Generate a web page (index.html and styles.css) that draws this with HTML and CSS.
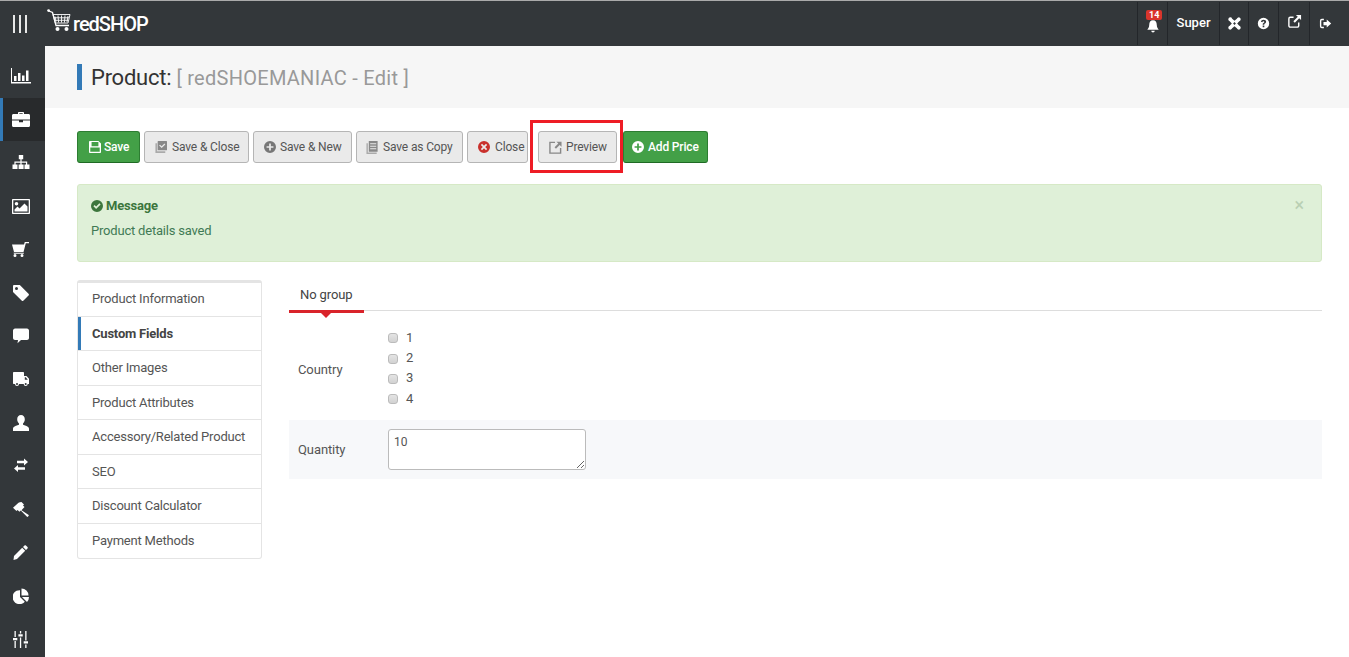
FILE: index.html
```html
<!DOCTYPE html>
<html lang="en">
<head>
<meta charset="utf-8">
<title>redSHOP - Product Edit</title>
<link rel="stylesheet" href="styles.css">
</head>
<body>
<header class="topbar">
  <div class="burger"><span></span><span></span><span></span></div>
  <div class="logo">
    <svg class="logo-cart" viewBox="0 0 24 24" width="24" height="24"><circle cx="1.600" cy="1.600" r="1.400" fill="#fff"/><path d="M2 2l3.500 1.500L9 16.500h13" fill="none" stroke="#fff" stroke-width="1.300"/><path d="M6 5.500h17l-2 8.500H8.300zM8 7.500l1 5M11 6.500l.6 7M14.500 6.500v7M18 6.500l-.6 7M21 7l-1 6M7 8.800h15M7.800 11.300h13.600" fill="none" stroke="#fff" stroke-width=".9"/><circle cx="10.500" cy="20" r="2" fill="#fff"/><circle cx="19.500" cy="20" r="2" fill="#fff"/></svg>
    <span class="logo-text">redSHOP</span>
  </div>
  <nav class="topnav">
    <a class="topcell bell"><svg viewBox="0 0 16 16" width="14" height="14"><path d="M8 1.500c3 0 4.300 2.200 4.300 5 0 3.500 1.700 4.800 2.200 5.800H1.500c.5-1 2.200-2.300 2.200-5.800 0-2.800 1.300-5 4.300-5zM6 13.300h4a2 2 0 0 1-4 0z" fill="#fff"/></svg><b class="badge">14</b></a>
    <a class="topcell user">Super</a>
    <a class="topcell joomla"><svg viewBox="0 0 16 16" width="13" height="13"><path fill="#fff" fill-rule="evenodd" d="M2.800 .4a2.400 2.400 0 0 1 2.300 1.700L8 4.700l2.900-2.600a2.400 2.400 0 1 1 3 3L11.300 8l2.600 2.900a2.400 2.400 0 1 1-3 3L8 11.300l-2.900 2.600a2.400 2.400 0 1 1-3-3L4.700 8 2.100 5.100A2.400 2.400 0 0 1 2.800 .4zM8 6.300L6.300 8 8 9.700 9.700 8z"/></svg></a>
    <a class="topcell help"><svg viewBox="0 0 16 16" width="13" height="13"><path fill-rule="evenodd" fill="#fff" d="M8 1a7 7 0 1 1 0 14A7 7 0 0 1 8 1zM7 10.500v2h2v-2zM8 3.500c-1.700 0-2.900.9-3.200 2.400l1.800.5c.2-.8.600-1.200 1.300-1.200s1.100.3 1.100.9c0 .5-.3.800-.9 1.200C7.300 7.400 7 8 7 9.500h2c0-.8.200-1 .8-1.500.8-.5 1.400-1.200 1.400-2.200 0-1.400-1.300-2.300-3.200-2.300z"/></svg></a>
    <a class="topcell ext"><svg viewBox="0 0 16 16" width="15" height="15"><path d="M7 3.500H3.500A1.500 1.500 0 0 0 2 5v7.500A1.500 1.500 0 0 0 3.500 14H11a1.500 1.500 0 0 0 1.500-1.500V9" fill="none" stroke="#fff" stroke-width="1.500"/><path d="M9.500 1H15v5.500l-2-2-4.700 4.700-1.500-1.500L11.500 3z" fill="#fff"/></svg></a>
    <a class="topcell logout"><svg viewBox="0 0 16 16" width="13" height="13"><path d="M6 3H3.500A1.500 1.500 0 0 0 2 4.500v7A1.500 1.500 0 0 0 3.500 13H6" fill="none" stroke="#fff" stroke-width="1.700"/><path d="M9.500 3L15 8l-5.500 5v-3H5.500V6h4z" fill="#fff"/></svg></a>
  </nav>
</header>
<div class="shell">
  <aside class="sidebar">
    <a class="side-item"><svg viewBox="0 0 20 16" width="20" height="16"><path d="M0 0h1v14h19v1.500H0z" fill="#fff"/><path d="M3 8h2.500v5H3zM7 5h2.500v8H7zM11 7.500h2.500V13H11zM15 2.500h2.500V13H15z" fill="#fff"/></svg></a>
    <a class="side-item active"><svg viewBox="0 0 18 15" width="18" height="15"><path d="M6 2V.8C6 .3 6.300 0 6.800 0h4.400c.5 0 .8.300.8.800V2h4.500c.9 0 1.500.6 1.500 1.500V7.500H0V3.500C0 2.600.6 2 1.500 2zM7.300 1.200V2h3.400v-.8z" fill="#fff" fill-rule="evenodd"/><path d="M0 8.500h7v1.800h4V8.500h7v5c0 .9-.6 1.500-1.500 1.500h-15C.6 15 0 14.400 0 13.500z" fill="#fff"/></svg></a>
    <a class="side-item"><svg viewBox="0 0 18 15" width="18" height="15"><path d="M6.800 0h4.400v4.300H9.600V6.500h5.600v3h2.300v4.500h-5v-4.500h1.500V7.700H9.600v1.800h2v4.500h-5V9.500h1.800V7.700H3.600v1.800h1.900v4.500h-5V9.500h1.900v-3h6V4.300H6.800z" fill="#fff"/></svg></a>
    <a class="side-item"><svg viewBox="0 0 18 15" width="18" height="15"><path fill-rule="evenodd" fill="#fff" d="M1 0h16c.6 0 1 .4 1 1v13c0 .6-.4 1-1 1H1c-.6 0-1-.4-1-1V1c0-.6.4-1 1-1zM1.300 1.300v12.400h15.400V1.300zM2.500 12.500v-2l3-3 2 2 5-5 3 3v5zM4.500 3a1.800 1.800 0 1 1 0 3.600 1.800 1.800 0 0 1 0-3.600z"/></svg></a>
    <a class="side-item"><svg viewBox="0 0 17 15" width="17" height="15"><path d="M0 2.500h12l.8-2.500H17v1.300h-3.200L11.500 10H2zM3 12a1.500 1.500 0 1 1 0 3 1.500 1.500 0 0 1 0-3zM10 12a1.500 1.500 0 1 1 0 3 1.500 1.500 0 0 1 0-3z" fill="#fff"/><path d="M1.500 10.800h10.300v1H2z" fill="#fff"/></svg></a>
    <a class="side-item"><svg viewBox="0 0 16 16" width="16" height="16"><path fill-rule="evenodd" fill="#fff" d="M1.200 0h5.600L15.500 8.700c.6.600.6 1.300 0 1.900l-5 5c-.6.600-1.300.6-1.900 0L0 7V1.200C0 .5.500 0 1.200 0zM3.500 2a1.500 1.500 0 1 0 0 3 1.500 1.500 0 0 0 0-3z"/></svg></a>
    <a class="side-item"><svg viewBox="0 0 16 16" width="16" height="16"><path d="M2 .5h12c1 0 2 1 2 2v7.500c0 1-1 2-2 2H8l-3.500 3.200.5-3.200H2c-1 0-2-1-2-2V2.500c0-1 1-2 2-2z" fill="#fff"/></svg></a>
    <a class="side-item"><svg viewBox="0 0 16 15" width="16" height="15"><path fill-rule="evenodd" fill="#fff" d="M1 0h9c.6 0 1 .4 1 1v3h2.500L16 6.800V12h-1.300a2 2 0 0 1-4 0H6a2 2 0 0 1-4 0H1c-.6 0-1-.4-1-1V1c0-.6.400-1 1-1zM11.800 5.300V7.800h3l-2-2.500zM4 11a1 1 0 1 0 0 2 1 1 0 0 0 0-2zM12.700 11a1 1 0 1 0 0 2 1 1 0 0 0 0-2z"/></svg></a>
    <a class="side-item"><svg viewBox="0 0 16 16" width="16" height="16"><path d="M8 0c2.300 0 3.800 1.800 3.800 4.300 0 2-.9 3.500-1.800 4.300v1.100c2.500.9 6 1.700 6 4.100V16H0v-2.200c0-2.400 3.500-3.200 6-4.100V8.600C5.100 7.800 4.200 6.300 4.200 4.300 4.200 1.800 5.700 0 8 0z" fill="#fff"/></svg></a>
    <a class="side-item"><svg viewBox="0 0 14 15" width="14" height="15"><path d="M14 4L10 .5v2.300H3V5.200h7v2.300zM0 10.500L4 7v2.300h7v2.400H4V14z" fill="#fff"/></svg></a>
    <a class="side-item"><svg viewBox="0 0 16 15" width="16" height="15"><path d="M0 5.800L5.500 .8c.8-.6 1.800-.8 3-.8L11 2.500l-1 1 1.500 1.500-3 3.200 7.200 4.800c.5.600-1 2.400-1.700 1.800L7.800 8.500 6.500 9.800 4.500 8 3.500 9z" fill="#fff"/></svg></a>
    <a class="side-item"><svg viewBox="0 0 15 15" width="15" height="15"><path d="M11.500.5c.4-.4 1-.4 1.400 0l1.600 1.600c.4.400.4 1 0 1.400L13 5 10 2zM9.200 2.800l3 3L4 14 .5 15l.5-4z" fill="#fff"/></svg></a>
    <a class="side-item"><svg viewBox="0 0 16 16" width="16" height="16"><path d="M7 2.200V9l4.800 4.800A7 7 0 1 1 7 2.200z" fill="#fff"/><path d="M8.500.5A7 7 0 0 1 15.500 7.500H8.500zM9 9h7a7 7 0 0 1-2 4.900z" fill="#fff"/></svg></a>
    <a class="side-item"><svg viewBox="0 0 15 17" width="15" height="17"><path d="M1.500 0h1.300v6H1.500zM1.500 10h1.300v7H1.500zM0 7h4.300v2.300H0zM6.900 0h1.300v2.500H6.900zM6.900 6.500h1.300V17H6.900zM5.400 3.300h4.300v2.300H5.400zM12.200 0h1.300v9.500h-1.300zM12.200 13.500h1.300V17h-1.300zM10.700 10.300H15v2.300h-4.300z" fill="#fff"/></svg></a>
  </aside>
  <main class="content">
    <div class="titlebar">
      <h1 class="page-title">Product: <small>[ redSHOEMANIAC - Edit ]</small></h1>
    </div>
    <div class="body-wrap">
      <div class="toolbar">
        <button class="btn btn-green btn-save"><svg viewBox="0 0 14 14" width="12" height="12"><path fill-rule="evenodd" fill="#fff" d="M1 0h10l3 3v10c0 .6-.4 1-1 1H1c-.6 0-1-.4-1-1V1c0-.6.400-1 1-1zM3 1.300V6h8V1.300zM1.500 7.500v5h11v-5z"/></svg>Save</button>
        <button class="btn btn-sc"><svg viewBox="0 0 14 14" width="12" height="12"><path d="M2.500 2.500V12H12v2H.5V2.500z" fill="#aaa"/><path fill-rule="evenodd" d="M3.800 0h9.500c.4 0 .7.300.7.700v9.500c0 .4-.3.700-.7.700H3.800c-.4 0-.7-.3-.7-.7V.7c0-.4.300-.7.700-.7zM5.800 4.300L4.800 5.300l3 2.800L12 4l-1-1-3.200 3z" fill="#888"/></svg>Save &amp; Close</button>
        <button class="btn btn-sn"><svg viewBox="0 0 14 14" width="12" height="12"><path fill-rule="evenodd" fill="#777" d="M7 0a7 7 0 1 1 0 14A7 7 0 0 1 7 0zM6 3v3H3v2h3v3h2V8h3V6H8V3z"/></svg>Save &amp; New</button>
        <button class="btn btn-copy"><svg viewBox="0 0 14 14" width="13" height="13"><path d="M2 2.500V12.500h9.500V14H.5V2.500z" fill="#aaa"/><path fill-rule="evenodd" fill="#888" d="M3 0h9.500v11.500H3zM4.500 2.500v1h6.500v-1zM4.500 5.200v1h6.500v-1zM4.500 7.900v1h6.500v-1z"/></svg>Save as Copy</button>
        <button class="btn btn-close"><svg viewBox="0 0 14 14" width="12" height="12"><path fill-rule="evenodd" fill="#c9302c" d="M7 0a7 7 0 1 1 0 14A7 7 0 0 1 7 0zM4.700 3.300L3.300 4.700 5.600 7 3.300 9.300l1.400 1.400L7 8.400l2.300 2.300 1.400-1.400L8.400 7l2.300-2.300-1.400-1.400L7 5.600z"/></svg>Close</button>
        <div class="preview-wrap">
          <span class="highlight"></span>
          <button class="btn btn-preview"><svg viewBox="0 0 14 14" width="13" height="13"><path d="M6.500 1.500H1v11.500h11.500V7.500" fill="none" stroke="#888" stroke-width="1.500"/><path d="M8 .8h5.500v5.500l-2-2-4 4L6 6.800l4-4z" fill="#888"/></svg>Preview</button>
        </div>
        <button class="btn btn-green btn-add"><svg viewBox="0 0 14 14" width="12" height="12"><path fill-rule="evenodd" fill="#fff" d="M7 0a7 7 0 1 1 0 14A7 7 0 0 1 7 0zM6 3v3H3v2h3v3h2V8h3V6H8V3z"/></svg>Add Price</button>
      </div>
      <div class="alert">
        <span class="alert-close">×</span>
        <h4 class="alert-title"><svg viewBox="0 0 14 14" width="12" height="12"><path fill-rule="evenodd" fill="#3c763d" d="M7 0a7 7 0 1 1 0 14A7 7 0 0 1 7 0zM4.200 5.800L2.800 7.200 6 10.400l5.200-5.200-1.400-1.400L6 7.600z"/></svg>Message</h4>
        <p class="alert-text">Product details saved</p>
      </div>
      <div class="columns">
        <ul class="sidetabs">
          <li>Product Information</li>
          <li class="current">Custom Fields</li>
          <li>Other Images</li>
          <li>Product Attributes</li>
          <li>Accessory/Related Product</li>
          <li>SEO</li>
          <li>Discount Calculator</li>
          <li>Payment Methods</li>
        </ul>
        <section class="panel">
          <div class="tabs"><span class="tab">No group</span></div>
          <div class="field">
            <label class="field-label field-label-low">Country</label>
            <div class="checks">
              <label class="check"><input type="checkbox">1</label>
              <label class="check"><input type="checkbox">2</label>
              <label class="check"><input type="checkbox">3</label>
              <label class="check"><input type="checkbox">4</label>
            </div>
          </div>
          <div class="field field-alt">
            <label class="field-label">Quantity</label>
            <textarea class="qty">10</textarea>
          </div>
        </section>
      </div>
    </div>
  </main>
</div>
</body>
</html>
```
FILE: styles.css
```css
* { box-sizing: border-box; }
html, body { margin: 0; height: 657px; overflow: hidden; }
body { font-family: Roboto, "Liberation Sans", sans-serif; font-size: 13px; color: #555; background: #fff; }

.topbar { height: 46px; background: #33373a; border-top: 1px solid #aaa; display: flex; align-items: center; }
.burger { width: 45px; display: flex; justify-content: center; gap: 4px; padding-right: 6px; padding-top: 1px; }
.burger span { width: 2px; height: 18px; background: #e8e8e8; }
.logo { display: flex; align-items: center; height: 44px; }
.logo-cart { margin: -6px 0 0 2px; }
.logo-text { color: #fff; font-size: 20px; font-weight: 500; letter-spacing: -1px; margin: 1px 0 0 2px; }
.topnav { margin-left: auto; display: flex; height: 43px; margin-top: -1px; padding-right: 9px; }
.topcell { position: relative; display: flex; align-items: center; justify-content: center; border-left: 1px solid #23262a; color: #fff; }
.bell { width: 30px; padding-top: 5px; }
.user { width: 52px; font-size: 13px; font-weight: 500; padding-bottom: 1px; }
.joomla { width: 29px; }
.help { width: 30px; }
.ext { width: 31px; padding-bottom: 3px; }
.logout { width: 31px; }
.badge { position: absolute; top: 8px; left: 8px; background: #d9352c; color: #fff; font-size: 9px; line-height: 10px; padding: 0 3px; border-radius: 2px; font-weight: 700; }

.shell { display: flex; height: 611px; }
.sidebar { width: 45px; flex: none; background: #33373a; padding-top: 8.500px; overflow: hidden; }
.side-item { height: 43.3px; display: flex; align-items: center; justify-content: center; padding-right: 4px; }
.side-item.active { background: #282a2c; box-shadow: inset 3px 0 0 #337ab7; }

.content { flex: 1; min-width: 0; }
.titlebar { height: 62px; background: #f6f6f6; padding: 18px 32px 0; }
.page-title { margin: 0; height: 26px; border-left: 5px solid #337ab7; padding-left: 9px; font-size: 22px; line-height: 28px; font-weight: 400; color: #333; letter-spacing: -.25px; }
.page-title small { font-size: 20px; color: #999; letter-spacing: .27px; }

.body-wrap { padding: 23px 27px 0 32px; }
.toolbar { display: flex; gap: 4px; height: 32px; }
.btn { height: 32px; padding: 0 0 0 10px; display: inline-flex; align-items: center; gap: 5px; background: #eaeaea; border: 1px solid #b5b5b5; border-radius: 3px; color: #555; font: 12px/1 Roboto, "Liberation Sans", sans-serif; letter-spacing: -.15px; white-space: nowrap; }
.btn-green { background: #43a047; border-color: #2d7d32; border-bottom-color: #1f6a24; color: #fff; font-weight: 500; }
.btn-save { width: 63px; padding-left: 11px; gap: 3px; }
.btn-sc { width: 105px; }
.btn-sn { width: 99px; gap: 4px; }
.btn-copy { width: 107px; gap: 4px; padding-left: 9px; }
.btn-close { width: 61px; }
.btn-preview { width: 79px; gap: 4px; }
.btn-add { width: 85px; margin-left: -4px; padding-left: 8px; gap: 4px; }
.preview-wrap { position: relative; margin: 0 6px; }
.highlight { position: absolute; left: -8px; right: -6px; top: -11px; bottom: -10px; border: 3px solid #ee1c25; pointer-events: none; }

.alert { position: relative; height: 78px; margin-top: 21px; padding: 13px 13px; background: #dff0d8; border: 1px solid #d6e9c6; border-radius: 3px; color: #3c763d; letter-spacing: -.2px; }
.alert-close { position: absolute; right: 17px; top: 10px; font-size: 18px; line-height: 20px; color: #b9cfb3; }
.alert-title { margin: 0; display: flex; align-items: center; gap: 3px; font-size: 13px; line-height: 15px; font-weight: 700; }
.alert-text { margin: 10px 0 0; line-height: 15px; color: #3f7a55; }

.columns { display: flex; gap: 27px; margin-top: 18px; align-items: flex-start; }
.sidetabs { list-style: none; margin: 0; padding: 0; width: 185px; flex: none; border: 1px solid #e4e4e4; border-top: 3px solid #e4e4e4; border-radius: 3px; letter-spacing: -.2px; }
.sidetabs li { height: 34.500px; padding: 0 14px; display: flex; align-items: center; color: #555; border-bottom: 1px solid #e4e4e4; white-space: nowrap; }
.sidetabs li:first-child { height: 33.500px; padding-bottom: 1px; }
.sidetabs li:last-child { border-bottom: 0; }
.sidetabs .current { font-weight: 700; color: #444; box-shadow: inset 3px 0 0 #337ab7; }

.panel { flex: 1; min-width: 0; }
.tabs { height: 31px; border-bottom: 1px solid #ddd; }
.tab { position: relative; display: block; width: 75px; height: 33px; padding-left: 11px; line-height: 30px; color: #444; border-bottom: 3px solid #d9232a; letter-spacing: -.1px; }
.tab::after { content: ""; position: absolute; left: 32px; bottom: -8px; border: 5px solid transparent; border-bottom: 0; border-top-color: #d9232a; }
.field { display: flex; align-items: center; }
.field-label { width: 99px; padding-left: 9px; flex: none; color: #555; letter-spacing: -.1px; }
.field-label-low { margin-top: 8px; }
.checks { padding-top: 16px; height: 109px; }
.check { display: flex; align-items: center; height: 20.400px; color: #555; }
.check input { appearance: none; margin: 2px 8px 0 0; width: 10px; height: 10px; background: linear-gradient(#e4e4e4, #d2d2d2); border: 1px solid #bbb; border-radius: 3px; }
.field-alt { height: 59px; background: #f7f8fa; }
.qty { width: 198px; height: 41px; padding: 5px; border: 1px solid #bbb; border-radius: 3px; font: 12px/15px Roboto, "Liberation Sans", sans-serif; color: #555; }
```
